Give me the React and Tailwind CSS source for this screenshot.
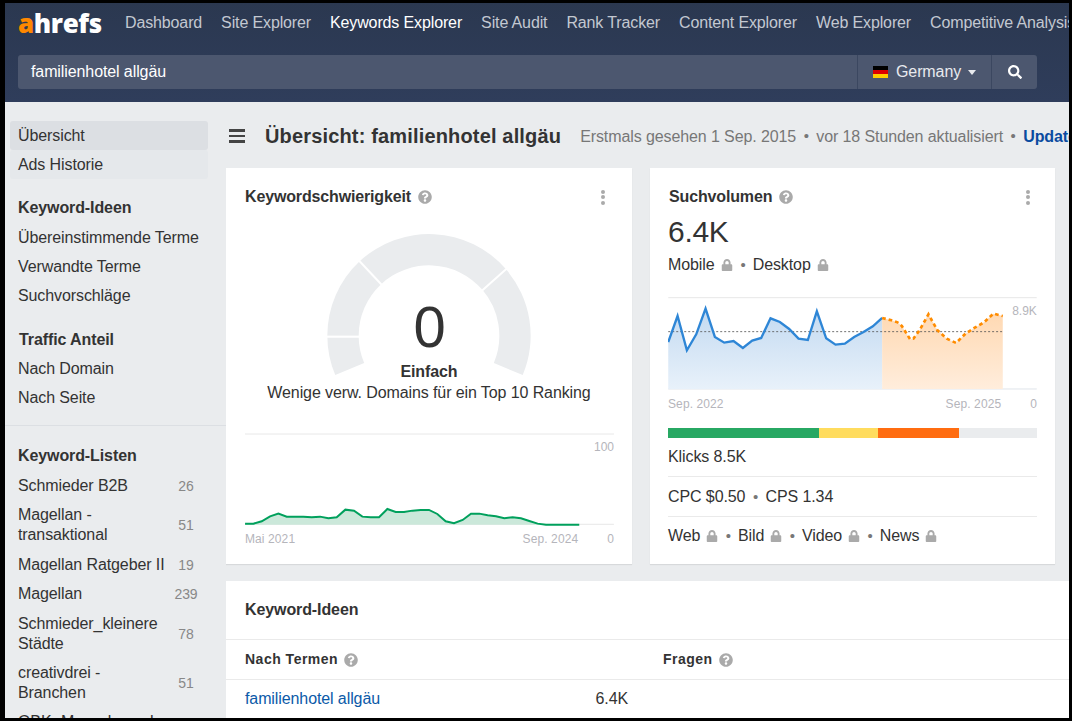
import React from "react";
import { FaQuestionCircle, FaLock, FaSearch } from "react-icons/fa";

const polar = (r, deg) => {
  const a = (deg * Math.PI) / 180;
  return [608 + r * Math.cos(a), 497 - r * Math.sin(a)];
};
const seg = (a1, a2) => {
  const R = 305, r = 211;
  const [x1, y1] = polar(R, a1), [x2, y2] = polar(R, a2), [x3, y3] = polar(r, a2), [x4, y4] = polar(r, a1);
  return `M${x1} ${y1}A${R} ${R} 0 0 1 ${x2} ${y2}L${x3} ${y3}A${r} ${r} 0 0 0 ${x4} ${y4}Z`;
};

const kd = "57,312 82,312 107,305 132,290 157,282 182,291 207,291 232,291 257,293 282,291 307,296 332,293 358,270 384,273 409,291 434,293 459,293 484,268 509,277 534,277 559,273 584,271 609,271 634,283 659,305 684,311 710,301 735,282 760,282 785,287 810,290 835,296 860,293 885,296 910,304 935,312 960,315 1060,315";
const blue = "54,515 82,437 110,540 138,492 166,415 194,500 222,517 250,512 278,533 306,511 333,503 361,444 389,455 417,476 445,505 473,509 500,423 528,504 556,523 584,520 612,500 640,485 668,468 696,443";
const orange = "696,443 724,450 742,456 755,467 780,507 790,505 808,480 835,432 862,480 890,505 918,518 946,490 974,472 1002,456 1030,430 1058,437";

const Help = ({ className = "" }) => <FaQuestionCircle className={`text-[#aaaaaa] text-[14px] ${className}`} />;
const Lock = ({ className = "" }) => <FaLock className={`text-[#aaaaaa] text-[12px] ${className}`} />;
const Dot = ({ className = "" }) => <span className={`text-[#777777] text-[15px] ${className}`}>•</span>;
const Dots = () => (
  <div className="flex flex-col gap-[1.5px]">
    <span className="w-[4px] h-[4px] rounded-full bg-[#aaaaaa]" />
    <span className="w-[4px] h-[4px] rounded-full bg-[#aaaaaa]" />
    <span className="w-[4px] h-[4px] rounded-full bg-[#aaaaaa]" />
  </div>
);

const nav = ["Dashboard", "Site Explorer", "Keywords Explorer", "Site Audit", "Rank Tracker", "Content Explorer", "Web Explorer", "Competitive Analysis"];
const SideLink = ({ children }) => <div className="h-[29px] leading-[29px] pl-[13px]">{children}</div>;
const lists = [
  ["Schmieder B2B", 26],
  ["Magellan - transaktional", 51],
  ["Magellan Ratgeber II", 19],
  ["Magellan", 239],
  ["Schmieder_kleinere Städte", 78],
  ["creativdrei - Branchen", 51],
];

export default function App() {
  return (
    <div className="w-[1072px] h-[721px] bg-black pt-[3px] pl-[5px] pr-[3px] pb-[3px] overflow-hidden text-[16px] tracking-[-0.1px] text-[#333333] font-['Liberation_Sans',Arial,sans-serif]">
      <div className="w-full h-full flex flex-col overflow-hidden bg-[#eaecee]">
        <header className="h-[99px] shrink-0 bg-gradient-to-b from-[#2b3850] to-[#2f3d5b] pl-[13px] pr-0 overflow-hidden">
          <div className="h-[40px] flex items-center whitespace-nowrap">
            <div className="w-[107px] shrink-0 text-[26px] leading-[28px] font-extrabold font-['Open_Sans',sans-serif] text-white tracking-[-0.4px] -mt-[1px]">
              <span className="text-[#ff8800]">a</span>hrefs
            </div>
            <nav className="flex gap-[19px] text-[#c3c8d1] tracking-[-0.13px]">
              {nav.map((n) => (
                <span key={n} className={n === "Keywords Explorer" ? "text-white" : ""}>{n}</span>
              ))}
            </nav>
          </div>
          <div className="mt-[12px] h-[34px] w-[1019px] flex rounded-[3px] bg-[#4c576f] text-white">
            <div className="flex-1 pl-[13px] leading-[34px]">familienhotel allgäu</div>
            <div className="w-[134px] flex items-center pl-[15px] gap-[8px] border-l border-[#3b4760]">
              <div className="w-[15px] h-[12px] flex flex-col">
                <span className="h-[4px] bg-black" />
                <span className="h-[4px] bg-[#dd0000]" />
                <span className="h-[4px] bg-[#ffce00]" />
              </div>
              <span className="text-[#e8eaee]">Germany</span>
              <span className="w-0 h-0 border-l-[4px] border-r-[4px] border-t-[5px] border-l-transparent border-r-transparent border-t-[#e8eaee] -ml-[1px]" />
            </div>
            <div className="w-[46px] flex items-center justify-center border-l border-[#3b4760]">
              <FaSearch className="text-white text-[14px]" />
            </div>
          </div>
        </header>

        <div className="flex flex-1 min-h-0">
          <aside className="w-[221px] shrink-0 pt-[19px] overflow-hidden">
            <div className="ml-[5px] w-[198px] h-[29px] leading-[29px] pl-[8px] rounded-[3px] bg-[#dcdfe3]">Übersicht</div>
            <div className="ml-[5px] w-[198px] h-[29px] leading-[29px] pl-[8px] rounded-[3px] bg-[#e5e8eb]">Ads Historie</div>
            <div className="mt-[14px] h-[30px] leading-[29px] pl-[13px] font-bold">Keyword-Ideen</div>
            <SideLink>Übereinstimmende Terme</SideLink>
            <SideLink>Verwandte Terme</SideLink>
            <SideLink>Suchvorschläge</SideLink>
            <div className="mt-[15px] h-[29px] leading-[29px] pl-[14px] font-bold">Traffic Anteil</div>
            <SideLink>Nach Domain</SideLink>
            <SideLink>Nach Seite</SideLink>
            <div className="mt-[13px] border-t border-[#dcdfe3] pt-[15px]">
              <div className="h-[30px] leading-[29px] pl-[13px] font-bold">Keyword-Listen</div>
              <div>
                {lists.map(([name, c]) => (
                  <div key={name} className="flex items-center pl-[13px] py-[4.75px] leading-[20px]">
                    <div className="w-[150px] shrink-0">{name}</div>
                    <div className="w-[36px] text-center text-[14px] text-[#888888]">{c}</div>
                  </div>
                ))}
                <div className="pl-[13px] leading-[20px] pt-[4px] whitespace-nowrap">GBK- Messebesucher</div>
              </div>
            </div>
          </aside>

          <main className="flex-1 min-w-0 overflow-hidden pt-[19px]">
            <div className="h-[30px] flex items-center whitespace-nowrap">
              <div className="w-[16px] ml-[3px] flex flex-col gap-[3px] shrink-0">
                <span className="h-[2.5px] bg-[#444444]" />
                <span className="h-[2.5px] bg-[#444444]" />
                <span className="h-[2.5px] bg-[#444444]" />
              </div>
              <h1 className="ml-[20px] text-[20px] font-bold tracking-[0.16px]">Übersicht: familienhotel allgäu</h1>
              <span className="ml-[19px] text-[#777777] mt-[1px]">Erstmals gesehen 1 Sep. 2015</span>
              <Dot className="mx-[7.5px]" />
              <span className="text-[#777777] mt-[1px]">vor 18 Stunden aktualisiert</span>
              <Dot className="mx-[7.5px]" />
              <span className="font-bold text-[#0a4ba0] mt-[1px]">Update</span>
            </div>

            <div className="mt-[17px] flex gap-[18px] w-[829px]">
              {/* KD card */}
              <section className="w-[406px] h-[396px] bg-white shadow-[0_1px_1px_rgba(0,0,0,0.08)] px-[19px] shrink-0">
                <div className="h-[28px] mt-[15px] flex items-center justify-between pr-[8px]">
                  <div className="flex items-center gap-[7px] font-bold tracking-[-0.15px]">Keywordschwierigkeit <Help /></div>
                  <Dots />
                </div>
                <div className="relative mt-[19px] h-[170px]">
                  <svg className="absolute left-[78px] top-0" width="213.33" height="150" viewBox="290 180 640 450">
                    <path d={seg(202.8, 180)} fill="#eaecee" />
                    <path d={seg(180, 133.2)} fill="#eaecee" />
                    <path d={seg(133.2, 40.9)} fill="#eaecee" />
                    <path d={seg(40.9, -22.8)} fill="#eaecee" />
                    <line x1="290" y1="500" x2="410" y2="500" stroke="#fff" strokeWidth="6" />
                    <line x1="385" y1="258" x2="475" y2="354" stroke="#fff" strokeWidth="6" />
                    <line x1="850" y1="288" x2="760" y2="368" stroke="#fff" strokeWidth="6" />
                  </svg>
                  <div className="absolute inset-x-0 top-[61px] text-center leading-none">
                    <div className="text-[58px] leading-[72px] pl-[1px]">0</div>
                    <div className="font-bold leading-[20px] -mt-[1px]">Einfach</div>
                    <div className="leading-[22px] whitespace-nowrap">Wenige verw. Domains für ein Top 10 Ranking</div>
                  </div>
                </div>
                <div className="mt-[33px]">
                  <svg width="369" height="93.3" viewBox="57 40 1107 280" className="block">
                    <line x1="57" y1="43" x2="1164" y2="43" stroke="#e8e8e8" strokeWidth="3" />
                    <line x1="57" y1="314" x2="1164" y2="314" stroke="#e8e8e8" strokeWidth="3" />
                    <polygon points={`57,315 ${kd} 1060,315`} fill="#cbe8da" />
                    <polyline points={kd} fill="none" stroke="#00a05c" strokeWidth="6" />
                    <text x="1164" y="94" textAnchor="end" fontSize="36" fill="#b5b5bb" fontFamily="Liberation Sans">100</text>
                  </svg>
                  <div className="flex justify-between text-[12px] text-[#b5b5bb] tracking-[0.1px] mt-[4px] w-[369px]">
                    <span>Mai 2021</span>
                    <span className="flex gap-[29px]"><span>Sep. 2024</span><span>0</span></span>
                  </div>
                </div>
              </section>

              {/* Volume card */}
              <section className="w-[405px] h-[396px] bg-white shadow-[0_1px_1px_rgba(0,0,0,0.08)] px-[18px] shrink-0">
                <div className="h-[28px] mt-[15px] flex items-center justify-between pr-[7px]">
                  <div className="flex items-center gap-[7px] font-bold tracking-[-0.15px] pl-[1px]">Suchvolumen <Help /></div>
                  <Dots />
                </div>
                <div className="text-[30px] leading-[36px] mt-[3px] tracking-[-0.3px]">6.4K</div>
                <div className="mt-[3px] h-[24px] flex items-center gap-[6px]">
                  <span>Mobile</span><Lock /><Dot className="ml-[2px] mr-[1px]" /><span>Desktop</span><Lock />
                </div>
                <div className="mt-[20px]">
                  <svg width="369" height="93.3" viewBox="54 380 1106 280" className="block">
                    <defs>
                      <linearGradient id="gb" x1="0" y1="0" x2="0" y2="1">
                        <stop offset="0" stopColor="#c3daf1" />
                        <stop offset="1" stopColor="#e8f1fa" />
                      </linearGradient>
                      <linearGradient id="go" x1="0" y1="0" x2="0" y2="1">
                        <stop offset="0" stopColor="#ffd9b3" />
                        <stop offset="1" stopColor="#ffeddc" />
                      </linearGradient>
                    </defs>
                    <line x1="54" y1="382" x2="1160" y2="382" stroke="#e8e8e8" strokeWidth="3" />
                    <line x1="54" y1="656" x2="1160" y2="656" stroke="#dfe4ea" strokeWidth="3" />
                    <polygon points={`54,656 ${blue} 696,656`} fill="url(#gb)" />
                    <polygon points={`696,656 ${orange} 1058,656`} fill="url(#go)" />
                    <line x1="54" y1="484" x2="1058" y2="484" stroke="#555555" strokeWidth="2.5" strokeDasharray="6 6" />
                    <polyline points={blue} fill="none" stroke="#2e86d6" strokeWidth="7" />
                    <polyline points={orange} fill="none" stroke="#ff8c00" strokeWidth="8" strokeDasharray="11 9" />
                    <text x="1160" y="434" textAnchor="end" fontSize="36" fill="#b5b5bb" fontFamily="Liberation Sans">8.9K</text>
                  </svg>
                  <div className="flex justify-between text-[12px] text-[#b5b5bb] tracking-[0.1px] mt-[5px] w-[369px]">
                    <span>Sep. 2022</span>
                    <span className="flex gap-[29px]"><span>Sep. 2025</span><span>0</span></span>
                  </div>
                </div>
                <div className="mt-[15px] flex h-[10px] w-[369px]">
                  <span className="w-[151px] bg-[#27a863]" />
                  <span className="w-[59px] bg-[#ffdc5e]" />
                  <span className="w-[81px] bg-[#ff6c10]" />
                  <span className="flex-1 bg-[#eaecee]" />
                </div>
                <div className="w-[369px]">
                  <div className="h-[39px] leading-[38px] border-b border-[#eaeaea]">Klicks 8.5K</div>
                  <div className="h-[40px] leading-[39px] border-b border-[#eaeaea] flex items-center gap-[7.5px]">
                    <span>CPC $0.50</span><Dot /><span>CPS 1.34</span>
                  </div>
                  <div className="h-[38px] flex items-center gap-[6px]">
                    <span>Web</span><Lock /><Dot className="ml-[1.5px] mr-[1px]" />
                    <span>Bild</span><Lock /><Dot className="ml-[1.5px] mr-[1px]" />
                    <span>Video</span><Lock /><Dot className="ml-[1.5px] mr-[1px]" />
                    <span>News</span><Lock />
                  </div>
                </div>
              </section>
            </div>

            <section className="mt-[17px] bg-white">
              <div className="h-[59px] leading-[58px] pl-[19px] font-bold tracking-[-0.1px] border-b border-[#eaeaea]">Keyword-Ideen</div>
              <div className="h-[40px] flex items-center border-b border-[#eaeaea] font-bold text-[14px] tracking-[0.5px]">
                <div className="w-[437px] pl-[19px] flex items-center gap-[6px]">Nach Termen <Help /></div>
                <div className="flex items-center gap-[6px]">Fragen <Help /></div>
              </div>
              <div className="h-[38px] flex items-center">
                <div className="w-[402px] flex items-center justify-between">
                  <span className="pl-[19px] text-[#0b5aa8]">familienhotel allgäu</span>
                  <span>6.4K</span>
                </div>
              </div>
            </section>
          </main>
        </div>
      </div>
    </div>
  );
}
